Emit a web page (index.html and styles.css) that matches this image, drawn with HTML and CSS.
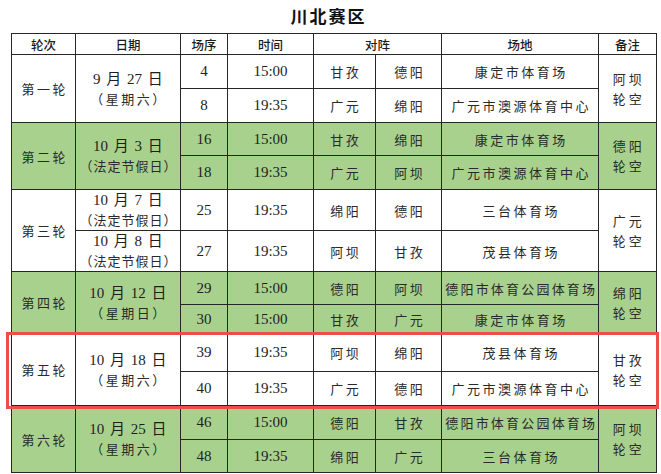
FILE: index.html
```html
<!DOCTYPE html>
<html lang="zh">
<head>
<meta charset="utf-8">
<title>川北赛区</title>
<link rel="stylesheet" href="styles.css">
</head>
<body>
<div class="page">
  <h1 class="title">川北赛区</h1>
  <div class="wrap">
    <table class="sched">
      <colgroup>
        <col class="c-round"><col class="c-date"><col class="c-no"><col class="c-time">
        <col class="c-team1"><col class="c-team2"><col class="c-venue"><col class="c-note">
      </colgroup>
      <thead>
        <tr class="h-head">
          <th>轮次</th><th>日期</th><th>场序</th><th>时间</th><th colspan="2">对阵</th><th>场地</th><th>备注</th>
        </tr>
      </thead>
      <tbody>
        <tr class="h34">
          <td rowspan="2" class="cj">第一轮</td>
          <td rowspan="2" class="date"><div>9 月 27 日</div><div class="wd">（星期六）</div></td>
          <td class="num">4</td><td class="num">15:00</td><td class="cj">甘孜</td><td class="cj">德阳</td><td class="cj">康定市体育场</td>
          <td rowspan="2" class="cj note">阿坝<br>轮空</td>
        </tr>
        <tr class="h34">
          <td class="num">8</td><td class="num">19:35</td><td class="cj">广元</td><td class="cj">绵阳</td><td class="cj">广元市澳源体育中心</td>
        </tr>

        <tr class="g h33">
          <td rowspan="2" class="cj">第二轮</td>
          <td rowspan="2" class="date"><div>10 月 3 日</div><div class="wd hol">（法定节假日）</div></td>
          <td class="num">16</td><td class="num">15:00</td><td class="cj">甘孜</td><td class="cj">绵阳</td><td class="cj">康定市体育场</td>
          <td rowspan="2" class="cj note">德阳<br>轮空</td>
        </tr>
        <tr class="g h34">
          <td class="num">18</td><td class="num">19:35</td><td class="cj">广元</td><td class="cj">阿坝</td><td class="cj">广元市澳源体育中心</td>
        </tr>

        <tr class="h41">
          <td rowspan="2" class="cj">第三轮</td>
          <td class="date"><div>10 月 7 日</div><div class="wd hol">（法定节假日）</div></td>
          <td class="num">25</td><td class="num">19:35</td><td class="cj">绵阳</td><td class="cj">德阳</td><td class="cj">三台体育场</td>
          <td rowspan="2" class="cj note">广元<br>轮空</td>
        </tr>
        <tr class="h41">
          <td class="date"><div>10 月 8 日</div><div class="wd hol">（法定节假日）</div></td>
          <td class="num">27</td><td class="num">19:35</td><td class="cj">阿坝</td><td class="cj">甘孜</td><td class="cj">茂县体育场</td>
        </tr>

        <tr class="g h33">
          <td rowspan="2" class="cj">第四轮</td>
          <td rowspan="2" class="date"><div>10 月 12 日</div><div class="wd">（星期日）</div></td>
          <td class="num">29</td><td class="num">15:00</td><td class="cj">德阳</td><td class="cj">阿坝</td><td class="cj tight">德阳市体育公园体育场</td>
          <td rowspan="2" class="cj note">绵阳<br>轮空</td>
        </tr>
        <tr class="g h29">
          <td class="num">30</td><td class="num">15:00</td><td class="cj">甘孜</td><td class="cj">广元</td><td class="cj">康定市体育场</td>
        </tr>

        <tr class="h38">
          <td rowspan="2" class="cj">第五轮</td>
          <td rowspan="2" class="date"><div>10 月 18 日</div><div class="wd">（星期六）</div></td>
          <td class="num">39</td><td class="num">19:35</td><td class="cj">阿坝</td><td class="cj">绵阳</td><td class="cj">茂县体育场</td>
          <td rowspan="2" class="cj note">甘孜<br>轮空</td>
        </tr>
        <tr class="h34">
          <td class="num">40</td><td class="num">19:35</td><td class="cj">广元</td><td class="cj">德阳</td><td class="cj">广元市澳源体育中心</td>
        </tr>

        <tr class="g h34">
          <td rowspan="2" class="cj">第六轮</td>
          <td rowspan="2" class="date"><div>10 月 25 日</div><div class="wd">（星期六）</div></td>
          <td class="num">46</td><td class="num">15:00</td><td class="cj">德阳</td><td class="cj">甘孜</td><td class="cj tight">德阳市体育公园体育场</td>
          <td rowspan="2" class="cj note">阿坝<br>轮空</td>
        </tr>
        <tr class="g h33">
          <td class="num">48</td><td class="num">19:35</td><td class="cj">绵阳</td><td class="cj">广元</td><td class="cj">三台体育场</td>
        </tr>
      </tbody>
    </table>
    <div class="highlight"></div>
  </div>
</div>
</body>
</html>
```
FILE: styles.css
```css
html, body {
  margin: 0;
  padding: 0;
  background: #ffffff;
}

.page {
  width: 661px;
  color: #222222;
  font-family: "Liberation Serif", "Noto Sans CJK SC", serif;
}

.title {
  margin: 0;
  height: 33px;
  line-height: 32px;
  text-align: center;
  font-family: "Noto Sans CJK SC", sans-serif;
  font-size: 17px;
  font-weight: 700;
  letter-spacing: 2px;
  padding-right: 4px;
  color: #111111;
}

.wrap {
  position: relative;
  margin-left: 11px;
  width: 645px;
}

.sched {
  border-collapse: collapse;
  table-layout: fixed;
  width: 645px;
}

.c-round { width: 64px; }
.c-date { width: 105px; }
.c-no { width: 47px; }
.c-time { width: 86px; }
.c-team1 { width: 62px; }
.c-team2 { width: 66px; }
.c-venue { width: 157px; }
.c-note { width: 58px; }

.sched th,
.sched td {
  border: 1px solid #262626;
  padding: 0;
  text-align: center;
  vertical-align: middle;
  overflow: hidden;
  white-space: nowrap;
}

.sched th {
  font-family: "Noto Sans CJK SC", sans-serif;
  font-size: 12.5px;
  font-weight: 500;
  color: #1c1c1c;
}

.h-head { height: 21px; }
.h29 { height: 29px; }
.h33 { height: 33px; }
.h34 { height: 34px; }
.h38 { height: 38px; }
.h41 { height: 41px; }

.g td { background: #a9d18e; }

.cj {
  font-family: "Noto Sans CJK SC", sans-serif;
  font-size: 13px;
  letter-spacing: 2.5px;
  padding-left: 2.5px !important;
  color: #2a2a2a;
}

.cj.tight {
  letter-spacing: 2.2px;
}

.num {
  font-family: "Liberation Serif", serif;
  font-size: 15px;
  color: #1e1e1e;
}

.note {
  line-height: 20px;
  letter-spacing: 3px;
}

.date {
  font-family: "Liberation Serif", "Noto Sans CJK SC", serif;
  font-size: 15px;
  line-height: 20px;
  word-spacing: 2px;
  color: #1e1e1e;
}

.date .wd {
  font-family: "Noto Sans CJK SC", sans-serif;
  font-size: 13px;
  letter-spacing: 2.5px;
  word-spacing: 0;
  padding-left: 2px;
  color: #2a2a2a;
}

.date .wd.hol {
  letter-spacing: 1px;
  padding-left: 1px;
}

.highlight {
  position: absolute;
  left: -5px;
  top: 299px;
  width: 653px;
  height: 77px;
  border: 3px solid #ee4d48;
  box-sizing: border-box;
  pointer-events: none;
}
```
